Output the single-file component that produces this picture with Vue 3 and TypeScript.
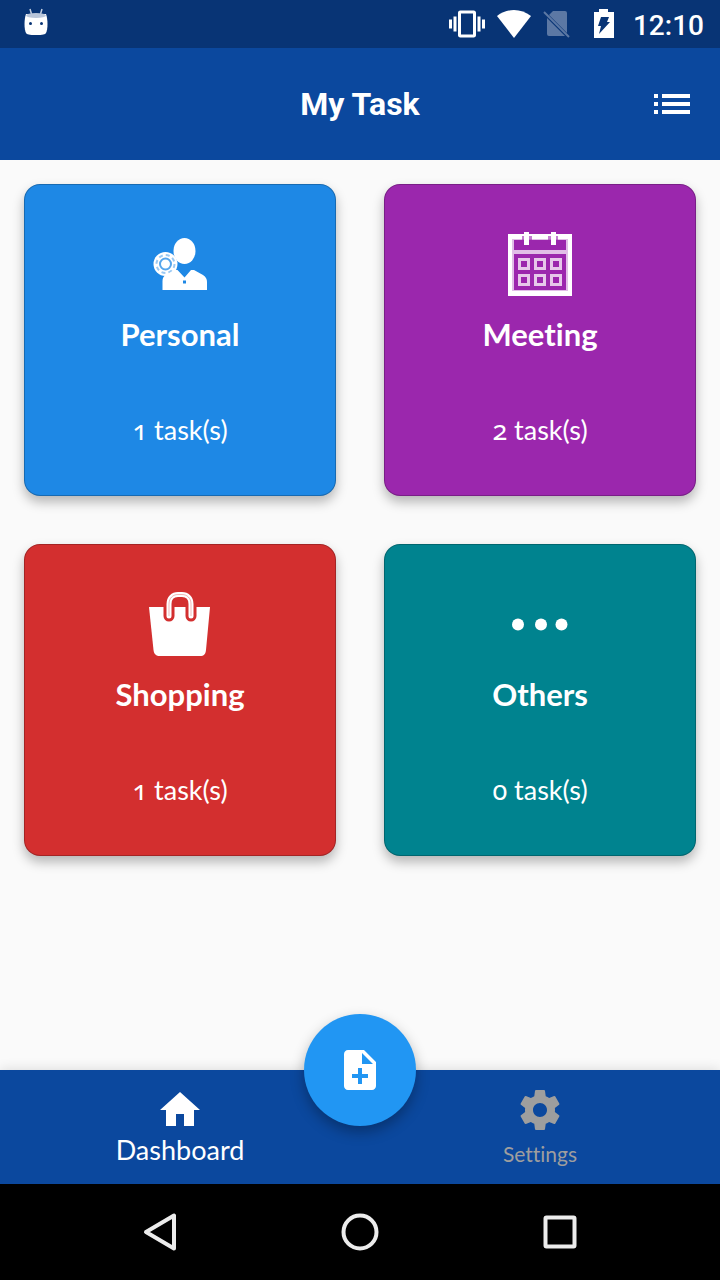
<script setup lang="ts">
import { ref } from 'vue'

type Kind = 'personal' | 'meeting' | 'shopping' | 'others'

interface Category {
  kind: Kind
  title: string
  count: number
}

const categories: Category[] = [
  { kind: 'personal', title: 'Personal', count: 1 },
  { kind: 'meeting', title: 'Meeting', count: 2 },
  { kind: 'shopping', title: 'Shopping', count: 1 },
  { kind: 'others', title: 'Others', count: 0 },
]

const columns = [10, 26, 42]
const rows = [26, 42]
const tab = ref<'dashboard' | 'settings'>('dashboard')
</script>

<template>
  <div class="screen">
    <div class="status">
      <svg class="droid" width="24" height="28" viewBox="0 0 24 28" aria-hidden="true">
        <path d="M6 1l1.500 5M18 1l-1.500 5" stroke="#c3cfe0" stroke-width="1.500" fill="none" />
        <path d="M2 6h20c1 3 1.500 6 1.500 10s-.5 7-1.500 9c-1 1.500-3 2-10 2s-9-.5-10-2c-1-2-1.500-5-1.500-9S1 9 2 6z" fill="#fff" />
        <ellipse cx="12" cy="7.500" rx="10" ry="2.500" fill="#b9c6da" />
        <circle cx="6.500" cy="15.500" r="1.500" fill="#083475" />
        <circle cx="17.500" cy="15.500" r="1.500" fill="#083475" />
      </svg>
      <div class="indicators">
        <svg width="36" height="36" viewBox="0 0 24 24" fill="#fff" aria-hidden="true">
          <path d="M0 15h2V9H0v6zm3 2h2V7H3v10zm19-8v6h2V9h-2zm-3 8h2V7h-2v10zM16.500 3h-9C6.670 3 6 3.670 6 4.500v15c0 .83.67 1.500 1.500 1.500h9c.83 0 1.500-.67 1.500-1.500v-15c0-.83-.67-1.500-1.500-1.500zM16 19H8V5h8v14z" />
        </svg>
        <svg width="34" height="28" viewBox="0 0 34 28" fill="#fff" aria-hidden="true">
          <path d="M17 28L0 6C5 2 11 0 17 0s12 2 17 6z" />
        </svg>
        <svg width="28" height="28" viewBox="0 0 28 28" aria-hidden="true">
          <path d="M10 1h12a2 2 0 0 1 2 2v20L6 5zM4 8l18 18H6a2 2 0 0 1-2-2z" fill="#5c78a4" />
          <path d="M1 2l25 25" stroke="#5c78a4" stroke-width="2" />
        </svg>
        <svg class="battery" width="20" height="30" viewBox="0 0 20 30" aria-hidden="true">
          <path d="M5 0h9v3h6v26H0V3h5z" fill="#fff" />
          <path d="M7 8h8l-2 5h3L5 25l2-8H4z" fill="#083475" />
        </svg>
        <time class="clock">12:10</time>
      </div>
    </div>

    <header class="bar">
      <h1>My Task</h1>
      <button class="menu" type="button" aria-label="Task list">
        <svg width="36" height="20" viewBox="0 0 36 20" fill="#fff" aria-hidden="true">
          <path d="M0 0h4v4H0zM8 0h28v4H8zM0 8h4v4H0zM8 8h28v4H8zM0 16h4v4H0zM8 16h28v4H8z" />
        </svg>
      </button>
    </header>

    <main class="grid">
      <button v-for="c in categories" :key="c.kind" type="button" class="card" :class="c.kind">
        <svg width="64" height="64" viewBox="0 0 64 64" fill="#fff" aria-hidden="true">
          <template v-if="c.kind === 'personal'">
            <ellipse cx="36.500" cy="19" rx="11" ry="13" />
            <circle cx="17.500" cy="32" r="12" />
            <circle cx="17.500" cy="32" r="9" fill="none" stroke="#1e88e5" stroke-opacity=".45" stroke-width="2" stroke-dasharray="4 3.070" />
            <circle cx="17.500" cy="32" r="5.500" fill="none" stroke="#1e88e5" stroke-opacity=".75" stroke-width="2" />
            <path d="M14.500 58V49c0-3 1-5 4-6.500l8-4.500h3l7 7.500L43 38h3l9 5c3 2 4 4 4 7v8z" />
            <path d="M35 48.500h3v3h-3z" fill="#1e88e5" />
          </template>
          <template v-else-if="c.kind === 'meeting'">
            <path fill-rule="evenodd" d="M0 2h64v62H0zM4 7v52h56V7z" />
            <path fill-rule="evenodd" d="M4 7h56v52H4zM6 8v50h52V8z" opacity=".7" />
            <path d="M6 18h52v4H6z" opacity=".7" />
            <path d="M14 4h10v4h-2v5h-6V8h-2zM40 4h10v4h-2v5h-6V8h-2z" fill="#9b27ad" opacity=".6" />
            <path d="M16 0h5v13h-5zM43 0h5v13h-5z" />
            <template v-for="y in rows" :key="y">
              <rect v-for="x in columns" :key="x" :x="x + 1.5" :y="y + 1.5" width="9" height="9" fill="none" stroke="#fff" stroke-opacity=".75" stroke-width="3" />
            </template>
          </template>
          <template v-else-if="c.kind === 'shopping'">
            <path d="M1 15h61l-4 43c-.5 4-2 6-6 6H12c-4 0-6-2-6.500-6z" />
            <path d="M21 15v9M43 15v9" stroke="#d32f2f" stroke-width="11" stroke-linecap="round" />
            <path d="M21 24V12c0-6 4-9.500 9-9.500h4c5 0 9 3.500 9 9.500v12" fill="none" stroke="#fff" stroke-width="5" stroke-linecap="round" />
            <path d="M21 24V12c0-6 4-9.500 9-9.500h4c5 0 9 3.500 9 9.500v12" fill="none" stroke="#d32f2f" stroke-opacity=".35" stroke-width="1" />
          </template>
          <template v-else>
            <circle cx="10" cy="32.500" r="6" />
            <circle cx="33" cy="32.500" r="6" />
            <circle cx="53.500" cy="32.500" r="6" />
          </template>
        </svg>
        <span class="title">{{ c.title }}</span>
        <span class="count"><span class="digit">{{ c.count }}</span> task(s)</span>
      </button>
    </main>

    <nav class="tabs" aria-label="Main">
      <button type="button" class="tab" :class="{ active: tab === 'dashboard' }" @click="tab = 'dashboard'">
        <svg width="48" height="48" viewBox="0 0 24 24" fill="currentColor" aria-hidden="true">
          <path d="M10 20v-6h4v6h5v-8h3L12 3 2 12h3v8z" />
        </svg>
        <span>Dashboard</span>
      </button>
      <button type="button" class="tab" :class="{ active: tab === 'settings' }" @click="tab = 'settings'">
        <svg width="48" height="48" viewBox="0 0 24 24" fill="currentColor" aria-hidden="true">
          <path d="M19.430 12.980c.04-.32.07-.64.07-.98s-.03-.66-.07-.98l2.110-1.650c.19-.15.24-.42.12-.64l-2-3.460c-.12-.22-.39-.3-.61-.22l-2.490 1c-.52-.4-1.080-.73-1.690-.98l-.38-2.650C14.460 2.180 14.250 2 14 2h-4c-.25 0-.46.18-.49.42l-.38 2.650c-.61.25-1.170.59-1.690.98l-2.490-1c-.23-.09-.49 0-.61.22l-2 3.460c-.13.22-.07.49.12.64l2.110 1.650c-.04.32-.07.65-.07.98s.03.66.07.98l-2.110 1.650c-.19.15-.24.42-.12.64l2 3.460c.12.22.39.3.61.22l2.490-1c.52.4 1.080.73 1.690.98l.38 2.650c.03.24.24.42.49.42h4c.25 0 .46-.18.49-.42l.38-2.650c.61-.25 1.170-.59 1.690-.98l2.490 1c.23.09.49 0 .61-.22l2-3.460c.12-.22.07-.49-.12-.64l-2.110-1.650zM12 15.500c-1.930 0-3.500-1.570-3.500-3.500s1.570-3.500 3.500-3.500 3.500 1.570 3.500 3.500-1.570 3.500-3.500 3.500z" />
        </svg>
        <span>Settings</span>
      </button>
      <button type="button" class="fab" aria-label="Add task">
        <svg width="48" height="48" viewBox="0 0 24 24" fill="#fff" aria-hidden="true">
          <path d="M14 2H6c-1.100 0-1.990.9-1.990 2L4 20c0 1.100.89 2 1.990 2H18c1.100 0 2-.9 2-2V8l-6-6zm2 14h-3v3h-2v-3H8v-2h3v-3h2v3h3v2zm-3-7V3.500L18.500 9H13z" />
        </svg>
      </button>
    </nav>

    <div class="system">
      <button type="button" aria-label="Back">
        <svg width="40" height="40" viewBox="0 0 40 40" aria-hidden="true">
          <path d="M34 3.500v33L6 20z" />
        </svg>
      </button>
      <button type="button" aria-label="Home">
        <svg width="40" height="40" viewBox="0 0 40 40" aria-hidden="true">
          <circle cx="20" cy="20" r="16.500" />
        </svg>
      </button>
      <button type="button" aria-label="Recent apps">
        <svg width="40" height="40" viewBox="0 0 40 40" aria-hidden="true">
          <rect x="5.500" y="5.500" width="29" height="29" rx="1" />
        </svg>
      </button>
    </div>
  </div>
</template>

<style>
body {
  margin: 0;
  background: #fafafa;
}
</style>

<style scoped>
.screen {
  display: flex;
  flex-direction: column;
  min-height: 100vh;
  background: #fafafa;
  color: #fff;
  font-family: Lato, "Noto Sans", sans-serif;
}

button {
  margin: 0;
  padding: 0;
  border: 0;
  background: none;
  color: inherit;
  font: inherit;
  font-variant-ligatures: none;
  cursor: pointer;
}

svg {
  display: block;
  flex: none;
}

.status {
  display: flex;
  justify-content: space-between;
  align-items: center;
  height: 48px;
  padding: 0 16px 0 24px;
  background: #083475;
}

.droid {
  margin-bottom: 4px;
}

.indicators {
  display: flex;
  align-items: center;
  gap: 12px;
}

.battery {
  margin: 0 7px 0 11px;
}

.clock {
  padding-top: 4px;
  font: 500 28px/44px Roboto, sans-serif;
}

.bar {
  display: grid;
  grid-template-columns: 1fr auto 1fr;
  align-items: center;
  height: 112px;
  padding: 0 30px;
  background: #0b489e;
}

.bar h1 {
  grid-column: 2;
  margin: 0;
  font: 700 32px/40px Roboto, sans-serif;
}

.menu {
  justify-self: end;
}

.grid {
  flex: 1;
  display: grid;
  grid-template-columns: 1fr 1fr;
  align-content: start;
  gap: 48px;
  padding: 24px;
}

.card {
  display: flex;
  flex-direction: column;
  align-items: center;
  box-sizing: border-box;
  aspect-ratio: 1;
  padding-top: 47px;
  border: 1px solid rgba(0, 0, 0, 0.22);
  border-radius: 16px;
  box-shadow: 0 6px 12px rgba(0, 0, 0, 0.28);
}

.personal {
  background: #1e88e5;
}

.meeting {
  background: #9b27ad;
}

.shopping {
  background: #d32f2f;
}

.others {
  background: #00838f;
}

.title {
  margin-top: 16px;
  font-size: 31px;
  font-weight: 700;
  line-height: 44px;
}

.count {
  margin-top: 54px;
  font-size: 27px;
  line-height: 40px;
}

.digit {
  font-family: "Noto Sans", sans-serif;
  font-variant-numeric: oldstyle-nums;
}

.tabs {
  position: relative;
  display: grid;
  grid-template-columns: 1fr 1fr;
  height: 114px;
  background: #0b489e;
  box-shadow: 0 0 12px rgba(0, 0, 0, 0.14);
}

.tab {
  display: flex;
  flex-direction: column;
  align-items: center;
  padding-top: 16px;
  color: #9e9e9e;
  font-size: 21px;
  line-height: 40px;
}

.tab.active {
  color: #fff;
  font-size: 27px;
  line-height: 32px;
}

.fab {
  position: absolute;
  top: -56px;
  left: calc(50% - 56px);
  display: grid;
  place-items: center;
  width: 112px;
  height: 112px;
  border-radius: 50%;
  background: #2196f3;
  box-shadow: 0 6px 14px rgba(0, 0, 0, 0.3);
}

.system {
  position: relative;
  display: grid;
  grid-template-columns: repeat(3, 1fr);
  height: 96px;
  padding: 0 60px;
  background: #000;
}

.system button {
  display: grid;
  place-items: center;
}

.system svg {
  fill: none;
  stroke: #ececec;
  stroke-width: 4;
  stroke-linejoin: round;
}
</style>
